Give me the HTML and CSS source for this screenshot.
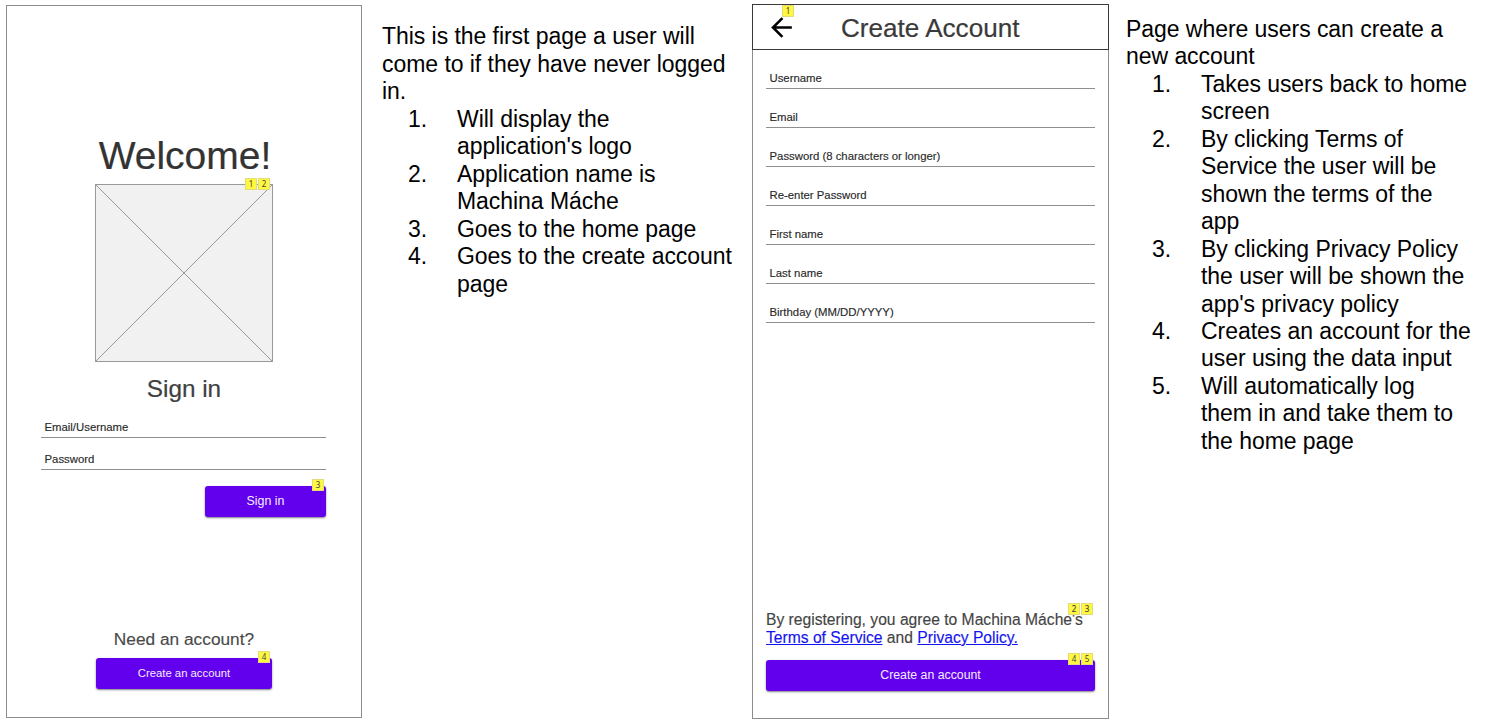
FILE: index.html
```
<!DOCTYPE html>
<html lang="en">
<head>
<meta charset="utf-8">
<title>Machina Máche wireframes</title>
<link rel="stylesheet" href="styles.css">
</head>
<body>
<main class="board">
  <section class="screen welcome">
    <h1 class="welcome-title">Welcome!</h1>
    <div class="logo">
      <svg class="logo-box" viewBox="0 0 178 178" width="178" height="178">
        <rect x=".5" y=".5" width="177" height="177"/>
        <path d="M.5 .5 177.5 177.5M177.5 .5 .5 177.5"/>
      </svg>
      <div class="tags tags-logo"><span class="tag">1</span><span class="tag">2</span></div>
    </div>
    <h2 class="signin-title">Sign in</h2>
    <div class="login">
      <div class="field field-first">Email/Username</div>
      <div class="field">Password</div>
      <div class="button button-signin">Sign in
        <div class="tags tags-button"><span class="tag">3</span></div>
      </div>
    </div>
    <p class="need">Need an account?</p>
    <div class="button button-create">Create an account
      <div class="tags tags-button"><span class="tag">4</span></div>
    </div>
  </section>

  <section class="notes notes-welcome">
    <p>This is the first page a user will<br>come to if they have never logged<br>in.</p>
    <ol>
      <li>Will display the<br>application's logo</li>
      <li>Application name is<br>Machina Máche</li>
      <li>Goes to the home page</li>
      <li>Goes to the create account<br>page</li>
    </ol>
  </section>

  <section class="screen register">
    <header class="bar">
      <div class="back">
        <svg viewBox="0 0 24 24" width="31" height="31"><path d="M20 11H7.83l5.59-5.59L12 4l-8 8 8 8 1.41-1.41L7.83 13H20v-2z"/></svg>
        <div class="tags tags-back"><span class="tag">1</span></div>
      </div>
      <h1 class="bar-title">Create Account</h1>
    </header>
    <div class="form">
      <div class="field">Username</div>
      <div class="field">Email</div>
      <div class="field">Password (8 characters or longer)</div>
      <div class="field">Re-enter Password</div>
      <div class="field">First name</div>
      <div class="field">Last name</div>
      <div class="field">Birthday (MM/DD/YYYY)</div>
    </div>
    <div class="terms">By registering, you agree to Machina Máche's<br><a href="#">Terms of Service</a> and <a href="#">Privacy Policy.</a>
      <div class="tags tags-terms"><span class="tag">2</span><span class="tag">3</span></div>
    </div>
    <div class="button button-register">Create an account
      <div class="tags tags-button"><span class="tag">4</span><span class="tag">5</span></div>
    </div>
  </section>

  <section class="notes notes-register">
    <p>Page where users can create a<br>new account</p>
    <ol>
      <li>Takes users back to home<br>screen</li>
      <li>By clicking Terms of<br>Service the user will be<br>shown the terms of the<br>app</li>
      <li>By clicking Privacy Policy<br>the user will be shown the<br>app's privacy policy</li>
      <li>Creates an account for the<br>user using the data input</li>
      <li>Will automatically log<br>them in and take them to<br>the home page</li>
    </ol>
  </section>
</main>
</body>
</html>
```
FILE: styles.css
```
* { box-sizing: border-box; }
body {
  margin: 0;
  background: #fff;
  color: #000;
  font-family: "Liberation Sans", Arial, Helvetica, sans-serif;
}
h1, h2, p, ol { margin: 0; padding: 0; font-weight: 400; }
.board {
  display: flex;
  align-items: flex-start;
  width: 1491px;
  height: 723px;
  overflow: hidden;
}
.screen {
  flex: none;
  display: flex;
  flex-direction: column;
  align-items: center;
  border: 1px solid #8c8c8c;
}

/* Welcome screen */
.welcome {
  width: 356px;
  height: 713px;
  margin: 5px 0 0 6px;
}
.welcome-title {
  margin-top: 128px;
  padding-left: 2px;
  font-size: 39px;
  line-height: 44px;
  color: #333;
  -webkit-text-stroke: .2px;
}
.logo { position: relative; margin-top: 6px; height: 178px; }
.logo-box { display: block; fill: #f1f1f1; stroke: #999; stroke-width: 1; }
.signin-title {
  margin-top: 13px;
  font-size: 24.3px;
  line-height: 28px;
  color: #404040;
  -webkit-text-stroke: .2px;
}
.login {
  display: flex;
  flex-direction: column;
  width: 285px;
  margin-right: 1px;
}
.field {
  display: flex;
  align-items: flex-end;
  height: 32px;
  padding: 0 0 3px 3.5px;
  border-bottom: 1px solid #8f8f8f;
  font-size: 11.35px;
  line-height: 14px;
  color: #2a2a2a;
  -webkit-text-stroke: .15px;
}
.field-first { height: 35px; }

.button {
  position: relative;
  display: flex;
  align-items: center;
  justify-content: center;
  height: 31px;
  padding-bottom: 1px;
  border-radius: 3px;
  background: #6200ee;
  box-shadow: 0 1px 2px rgba(0, 0, 0, .5);
  color: #f4edff;
  font-size: 12.3px;
}
.button-signin {
  align-self: flex-end;
  width: 121px;
  margin-top: 16px;
  font-size: 12.4px;
}
.need {
  margin-top: 112px;
  font-size: 17.3px;
  line-height: 20px;
  color: #4a4a4a;
  -webkit-text-stroke: .15px;
}
.button-create { width: 176px; margin-top: 9px; font-size: 11.3px; }

/* Numbered annotation tags pinned over the screens */
.tags { position: absolute; display: flex; gap: 1px; }
.tag {
  width: 12px;
  height: 12px;
  border: 1px solid #e3dc7a;
  background: #fff740;
  color: #444;
  font: 8px/10px "Noto Sans", sans-serif;
  text-align: center;
}
.tags-logo { top: -6px; right: 3px; }
.tags-button { top: -7px; right: 2px; }
.tags-back { top: -7px; left: 16px; }
.tags-terms { top: -8px; right: 2px; }

/* Notes */
.notes {
  flex: none;
  width: 350px;
  font-size: 23px;
  line-height: 27.5px;
  letter-spacing: -.05px;
  white-space: nowrap;
}
.notes ol { list-style: none; counter-reset: note; }
.notes li {
  display: grid;
  grid-template-columns: 49px auto;
  padding-left: 26px;
  counter-increment: note;
}
.notes li::before { content: counter(note) "."; }
.notes-welcome { margin: 23px 0 0 20px; }
.notes-register { margin: 16px 0 0 17px; line-height: 27.45px; }

/* Create account screen */
.register {
  width: 357px;
  height: 715px;
  margin: 4px 0 0 20px;
}
.bar {
  flex: none;
  display: flex;
  align-items: center;
  width: 357px;
  height: 46px;
  margin-top: -1px;
  border: 1px solid #3a3a3a;
}
.back { position: relative; width: 31px; height: 31px; margin-left: 13px; }
.back svg { display: block; }
.bar-title {
  margin: 2px 0 0 44px;
  font-size: 26.1px;
  line-height: 30px;
  color: #3a3a3a;
  white-space: nowrap;
  -webkit-text-stroke: .2px;
}
.form { width: 329px; }
.form .field { height: 39px; }
.terms {
  position: relative;
  width: 329px;
  margin-top: 288px;
  font-size: 15.65px;
  line-height: 18px;
  color: #444;
  white-space: nowrap;
  -webkit-text-stroke: .15px;
}
.terms a { color: #1414f0; }
.button-register { width: 329px; margin-top: 13px; }
```
